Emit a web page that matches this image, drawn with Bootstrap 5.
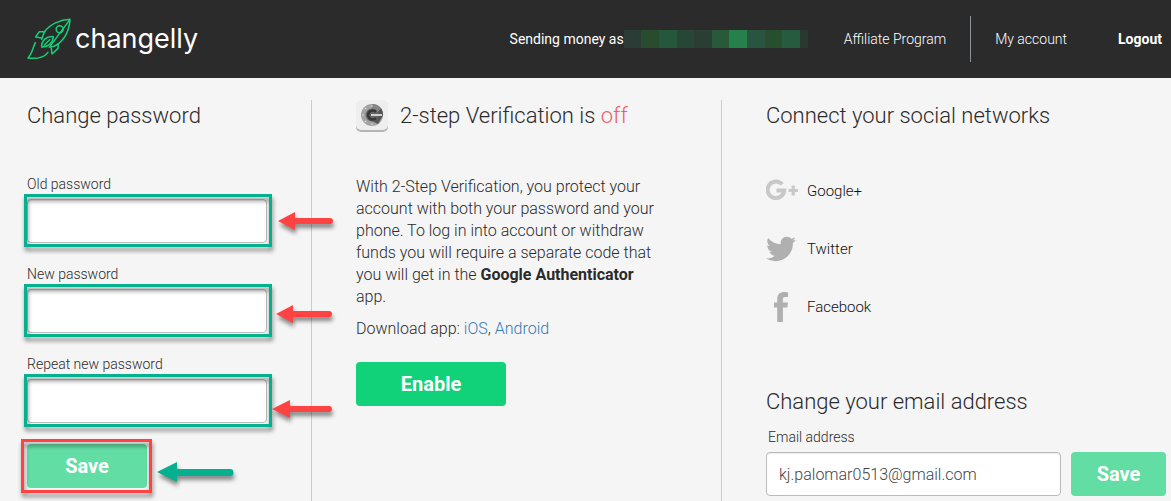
<!DOCTYPE html>
<html lang="en">
<head>
<meta charset="utf-8">
<meta name="viewport" content="width=device-width, initial-scale=1">
<title>Changelly – My account</title>
<link rel="stylesheet" href="https://cdn.jsdelivr.net/npm/bootstrap@5.3.0/dist/css/bootstrap.min.css">
<style>
  body { font-family: Roboto, "Liberation Sans", sans-serif; font-size: 16px; font-weight: 300; line-height: 22px; color: #2b2b2b; background: #f5f5f5; }
  a { color: #337ab7; text-decoration: none; }

  .site-header { height: 78px; padding: 0 9px 0 27px; background: #2b2b2b; font-size: 14px; }
  .site-header a, .site-header span { color: #fff; }
  .brand-link { gap: 4px; }
  .brand-word { font-family: Inter, "Open Sans", sans-serif; font-size: 27px; line-height: 36px; font-weight: 400; }
  .user-name { font-weight: 400; }
  .user-mask { width: 184px; height: 18px; margin-right: 36px; }
  .user-mask i { width: 18px; }
  .user-mask i:last-child { width: 8px; }
  .nav-account { height: 46px; margin-left: 24px; padding-left: 24px; border-left: 1px solid #8d9399; }
  .nav-logout { margin-left: 51px; }

  .panels { display: grid; grid-template-columns: 312fr 410fr 449fr; padding-top: 22px; }
  .panel-divided { border-right: 1px solid #ccc; }
  .panel-one { padding-left: 27px; }
  .panel-two { padding-left: 44px; padding-right: 64px; }
  .panel-three { padding-left: 44px; padding-right: 5px; }
  h2 { margin: 0; font-size: 22px; font-weight: 300; line-height: 32px; }

  label { display: block; font-size: 14px; line-height: 20px; }
  .form-control { height: 44px; padding: 0 12px; border: 1px solid #bbb; border-radius: 4px; font-size: 16px; font-weight: 300; color: #444; box-shadow: inset 0 1px 1px rgba(0,0,0,.08); }
  .password-form { padding-top: 42px; }
  .password-field { margin-bottom: 21px; }
  .marked { width: 240px; margin-top: 5px; }
  .btn-act { height: 44px; padding: 0; border: 0; border-radius: 4px; color: #fff; font-size: 20px; font-weight: 700; line-height: 44px; background: #11d279; }
  .btn-act:hover { color: #fff; background: #0fc06e; }
  .btn-soft { background: #62dda4; }
  .btn-save { width: 120px; }
  .btn-enable { width: 150px; margin-top: 22px; }
  .btn-mail { width: 95px; }

  /* tutorial marks laid over the form */
  .mark-frame { position: absolute; inset: -5px -5px -4px -3px; border: 3px solid #05b08f; filter: drop-shadow(1px 4px 2px rgba(0,0,0,.45)); pointer-events: none; z-index: 2; }
  .mark-frame-red { inset: -5px -5px -5px -6px; border-color: #ff4343; }
  .mark-arrow { position: absolute; left: 100%; top: 50%; height: 18px; margin-top: -8px; margin-left: 10px; filter: drop-shadow(1px 4px 2px rgba(0,0,0,.45)); pointer-events: none; z-index: 2; overflow: visible; }

  .auth-text { margin: 44px 0 10px; }
  .off { color: #ec5f67; }
  b { font-weight: 700; }
  .social { padding-top: 43px; gap: 26px; font-size: 15px; }
  .social a { color: #111; height: 32px; gap: 9px; }
  .social svg { width: 32px; height: 32px; }
  .mail-title { margin-top: 63px; }
  .mail-label { margin: 9px 0 5px 2px; }
  .mail-row { gap: 10px; }
</style>
</head>
<body class="d-flex flex-column min-vh-100">
<header class="site-header d-flex align-items-center">
  <a class="brand-link d-flex align-items-center" href="#">
    <svg width="44" height="42" viewBox="51 54 132 126" fill="none" stroke="#11d279" stroke-width="4.500" stroke-linejoin="round" stroke-linecap="round" aria-hidden="true">
      <path d="M180 58C151 59 119 73 103 96L95 118M118 142L134 138C162 124 179 91 180 58Z"/>
      <circle cx="149" cy="88" r="10.500"/>
      <path d="M104 95H88L77 111L95 114M145 131L144 145L126 162L124 145"/>
      <path d="M95 141C94 123 108 108 130 110C128 129 115 142 95 141ZM103 135L119 119"/>
      <path d="M76 128C68 144 67 160 54 174C77 177 101 174 114 157"/>
    </svg>
    <span class="brand-word">changelly</span>
  </a>
  <nav class="d-flex align-items-center ms-auto">
    <span class="user-name">Sending money as</span>
    <div class="user-mask d-flex" aria-hidden="true">
      <i style="background:#2b3b35"></i><i style="background:#294b2e"></i><i style="background:#25573d"></i><i style="background:#284635"></i><i style="background:#293f34"></i><i style="background:#285a39"></i><i style="background:#25804c"></i><i style="background:#285441"></i><i style="background:#284e30"></i><i style="background:#265b40"></i><i style="background:#29392d"></i>
    </div>
    <a href="#">Affiliate Program</a>
    <a class="nav-account d-flex align-items-center" href="#">My account</a>
    <a class="nav-logout fw-bold" href="#">Logout</a>
  </nav>
</header>

<main class="panels flex-grow-1">
  <section class="panel-one panel-divided">
    <h2>Change password</h2>
    <form class="password-form">
      <div class="password-field">
        <label for="old">Old password</label>
        <div class="marked position-relative">
          <input class="form-control" type="password" id="old">
          <div class="mark-frame"></div>
          <svg class="mark-arrow" width="56" viewBox="0 0 56 18" aria-hidden="true"><path d="M1 8L18 -1V5H53A3 3 0 0 1 53 11H18V17Z" fill="#ff4343"/></svg>
        </div>
      </div>
      <div class="password-field">
        <label for="new">New password</label>
        <div class="marked position-relative">
          <input class="form-control" type="password" id="new">
          <div class="mark-frame"></div>
          <svg class="mark-arrow" width="56" viewBox="0 0 56 18" aria-hidden="true"><path d="M-1 11L16 2V8H52A3 3 0 0 1 52 14H16V20Z" fill="#ff4343"/></svg>
        </div>
      </div>
      <div class="password-field">
        <label for="repeat">Repeat new password</label>
        <div class="marked position-relative">
          <input class="form-control" type="password" id="repeat">
          <div class="mark-frame"></div>
          <svg class="mark-arrow" width="56" viewBox="0 0 56 18" aria-hidden="true"><path d="M-5 16L13 7V13H52A3 3 0 0 1 52 19H13V25Z" fill="#ff4343"/></svg>
        </div>
      </div>
      <div class="position-relative d-inline-block">
        <button class="btn btn-act btn-soft btn-save d-block" type="button">Save</button>
        <div class="mark-frame mark-frame-red"></div>
        <svg class="mark-arrow" width="76" viewBox="0 0 76 18" aria-hidden="true"><path d="M0 14L20 4V11H73A3 3 0 0 1 73 18H20V24Z" fill="#05b08f"/></svg>
      </div>
    </form>
  </section>

  <section class="panel-two panel-divided">
    <div class="d-flex">
      <svg width="32" height="32" viewBox="0 0 32 32" aria-hidden="true">
        <rect y="1" width="32" height="31" rx="5" fill="#b5b5b5"/>
        <rect width="32" height="30" rx="5" fill="#eee"/>
        <circle cx="16" cy="15" r="11" fill="#a3a3a3"/>
        <path d="M16 4A11 11 0 0 1 25 8L21 12A6 6 0 0 0 16 9Z" fill="#858585"/>
        <path d="M25 8A11 11 0 0 1 27 15.500L22 24L14 20L20 14Z" fill="#555"/>
        <circle cx="16" cy="15" r="6.500" fill="#666"/>
        <path d="M20 12A4.500 4.500 0 1 0 20 18" fill="none" stroke="#383838" stroke-width="2.500"/>
        <path d="M15 15H26" stroke="#ddd" stroke-width="1.800"/>
        <g fill="#ddd"><circle cx="16" cy="6" r=".8"/><circle cx="9.500" cy="8.500" r=".8"/><circle cx="7" cy="15" r=".8"/><circle cx="9.500" cy="21.500" r=".8"/><circle cx="16" cy="24" r=".8"/></g>
      </svg>
      <h2 class="ms-2 ps-1">2-step Verification is <span class="off">off</span></h2>
    </div>
    <p class="auth-text">With 2-Step Verification, you protect your account with both your password and your phone. To log in into account or withdraw funds you will require a separate code that you will get in the <b>Google Authenticator</b> app.</p>
    <p class="m-0">Download app: <a href="#">iOS</a>, <a href="#">Android</a></p>
    <button class="btn btn-act btn-enable" type="button">Enable</button>
  </section>

  <section class="panel-three">
    <h2>Connect your social networks</h2>
    <div class="social d-flex flex-column align-items-start">
      <a class="d-flex align-items-center" href="#">
        <svg viewBox="0 0 32 32" aria-hidden="true"><path d="M16.200 9.300A8.300 8.300 0 1 0 18.200 15.500H10.500" fill="none" stroke="#c8c8c8" stroke-width="4"/><path d="M22.500 15.500H32M27.200 10.500V20.500" stroke="#c8c8c8" stroke-width="3.200"/></svg>
        <span>Google+</span>
      </a>
      <a class="d-flex align-items-center" href="#">
        <svg viewBox="0 -16 546 546" aria-hidden="true"><path fill="#b0b0b0" d="M459.370 151.716c.325 4.548.325 9.097.325 13.645 0 138.720-105.583 298.558-298.558 298.558-59.452 0-114.680-17.219-161.137-47.106 8.447.974 16.568 1.299 25.340 1.299 49.055 0 94.213-16.568 130.274-44.832-46.132-.975-84.792-31.188-98.112-72.772 6.498.974 12.995 1.624 19.818 1.624 9.421 0 18.843-1.300 27.614-3.573-48.081-9.747-84.143-51.980-84.143-102.985v-1.299c13.969 7.797 30.214 12.670 47.431 13.319-28.264-18.843-46.781-51.005-46.781-87.391 0-19.492 5.197-37.360 14.294-52.954 51.655 63.675 129.300 105.258 216.365 109.807-1.624-7.797-2.599-15.918-2.599-24.040 0-57.828 46.782-104.934 104.934-104.934 30.213 0 57.502 12.670 76.670 33.137 23.715-4.548 46.456-13.320 66.599-25.340-7.798 24.366-24.366 44.833-46.132 57.827 21.117-2.273 41.584-8.122 60.426-16.243-14.292 20.791-32.161 39.308-52.628 54.253z"/></svg>
        <span>Twitter</span>
      </a>
      <a class="d-flex align-items-center" href="#">
        <svg viewBox="-8 -1 32 32" aria-hidden="true"><path fill="#b0b0b0" d="M14 .2V5H11.500C9.300 5 8.900 6 8.900 7.600V10.500H14L13.300 15.500H8.900V30H3.200V15.500H0V10.500H3.200V7C3.200 2.500 5.800 0 10.500 0Z"/></svg>
        <span>Facebook</span>
      </a>
    </div>
    <form>
      <h2 class="mail-title">Change your email address</h2>
      <label class="mail-label" for="mail">Email address</label>
      <div class="mail-row d-flex">
        <input class="form-control flex-grow-1" type="email" id="mail" value="kj.palomar0513@gmail.com">
        <button class="btn btn-act btn-soft btn-mail flex-shrink-0" type="button">Save</button>
      </div>
    </form>
  </section>
</main>
<script src="https://cdn.jsdelivr.net/npm/bootstrap@5.3.0/dist/js/bootstrap.bundle.min.js"></script>
</body>
</html>
